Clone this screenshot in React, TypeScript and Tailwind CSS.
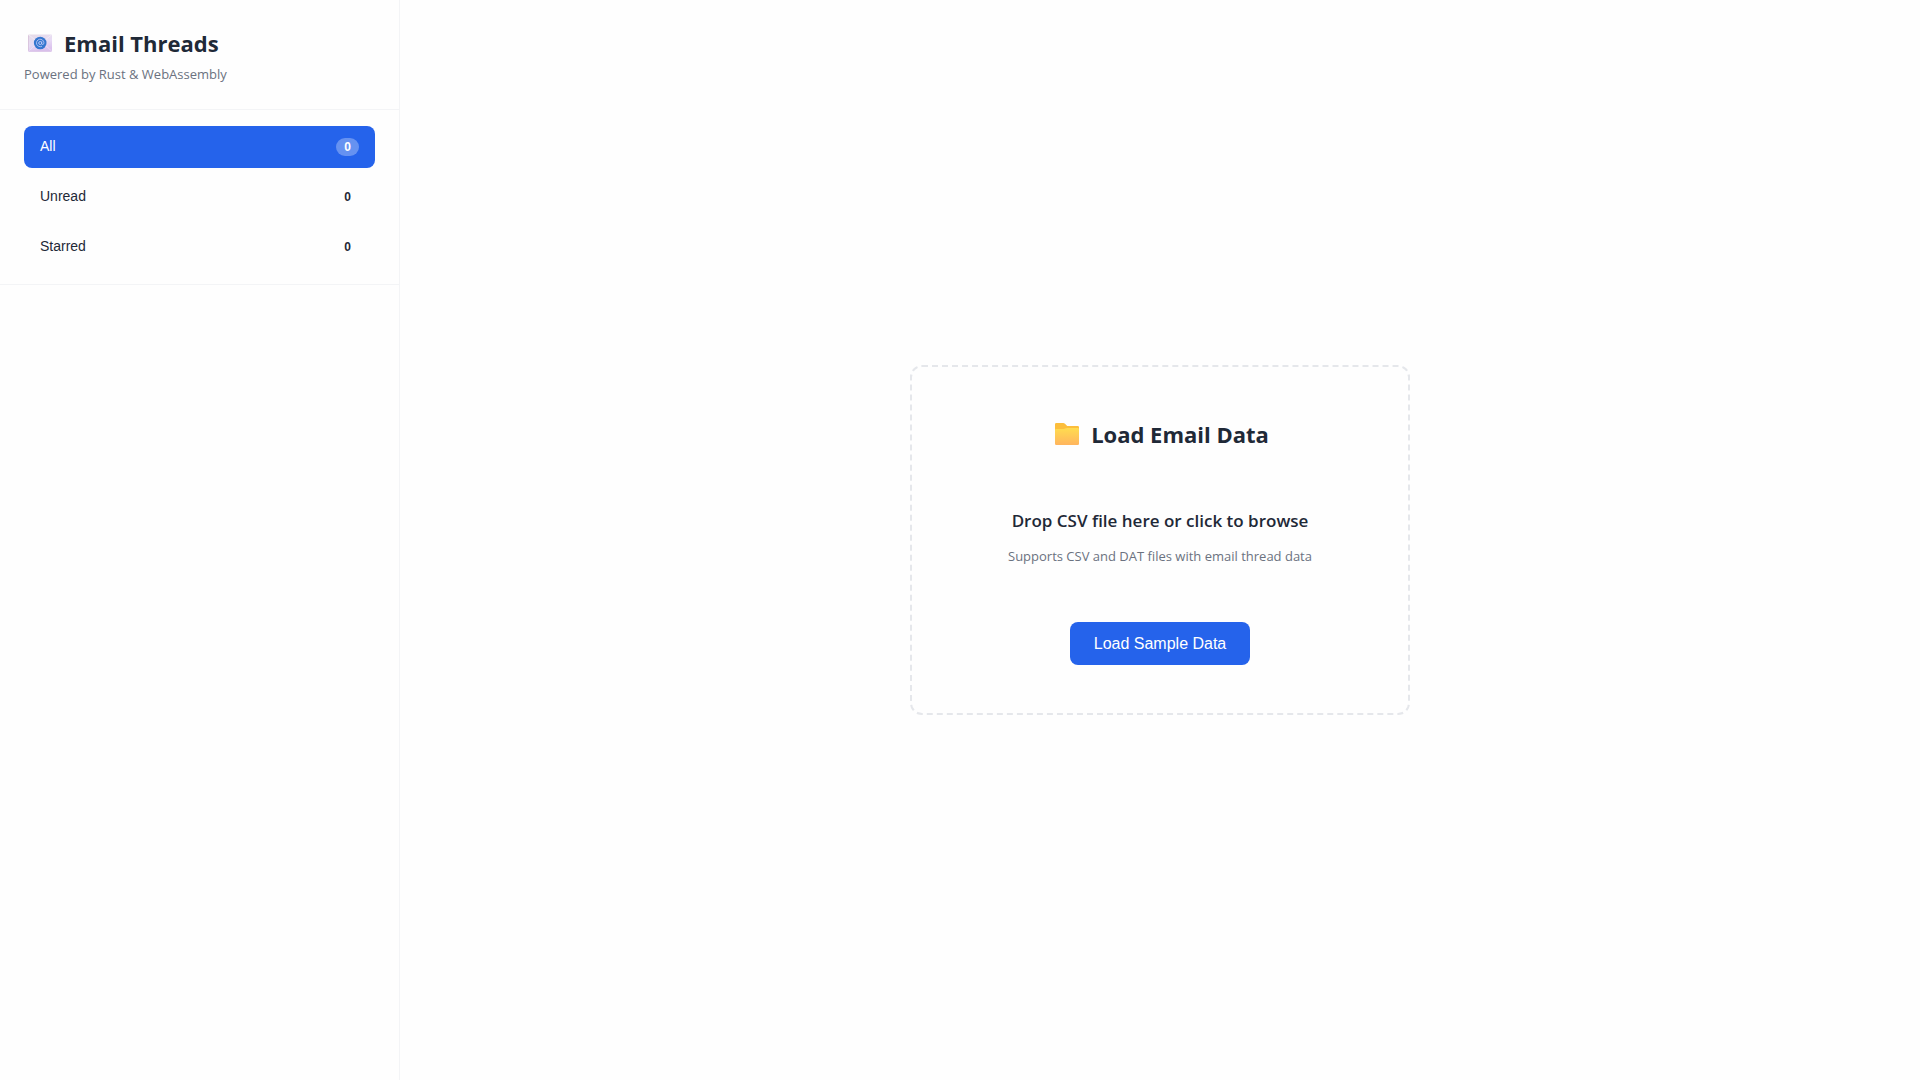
import { useId, useState } from "react";

function EnvelopeIcon() {
  return (
    <svg viewBox="0 0 24 18" className="h-[18px] w-6 shrink-0" aria-hidden="true">
      <defs>
        <linearGradient id="envelope-face" x1="0" y1="0" x2="0.4" y2="1">
          <stop offset="0" stopColor="#e5dbe6" />
          <stop offset="0.6" stopColor="#e8dcf5" />
          <stop offset="1" stopColor="#dcc3ee" />
        </linearGradient>
      </defs>
      <rect x="0" y="0.5" width="24" height="17" rx="1" fill="url(#envelope-face)" />
      <path d="M0 1.500V16.500" stroke="#d6bfd8" strokeWidth="1.500" />
      <path d="M1 1L12 10L23.500 1" fill="none" stroke="#f3eef8" strokeWidth="0.8" />
      <path d="M1 17L8 10M23.500 17L16 10" fill="none" stroke="#efe6f7" strokeWidth="0.7" />
      <path d="M0.500 17.200H23.500" stroke="#cfb0e0" strokeWidth="0.7" />
      <circle cx="12.200" cy="9" r="6.300" fill="#3577cf" />
      <circle cx="12.200" cy="9" r="1.500" fill="none" stroke="#b9c5f5" strokeWidth="1" />
      <path
        d="M13.800 7.400V9.700Q14 10.800 15 10.500Q16 10 15.900 8.700A3.700 3.700 0 1 0 14 12.200"
        fill="none"
        stroke="#b9c5f5"
        strokeWidth="0.9"
      />
    </svg>
  );
}

function FolderIcon() {
  return (
    <svg viewBox="0 0 24 22" className="h-[22px] w-6 shrink-0" aria-hidden="true">
      <defs>
        <linearGradient id="folder-front" x1="0" y1="0" x2="0" y2="1">
          <stop offset="0" stopColor="#ffdc4f" />
          <stop offset="1" stopColor="#ffb55e" />
        </linearGradient>
      </defs>
      <path d="M0 1.200Q0 0 1.200 0H8.200Q9.200 0 10 0.800L12.200 3H22.800Q24 3 24 4.200V9H0Z" fill="#fcbe3c" />
      <path d="M0 7.200Q0 6 1.200 6H8.500Q9.500 6 10.200 5.600L11 5.200Q11.500 5 12.200 5H22.800Q24 5 24 6.200V20.800Q24 22 22.800 22H1.200Q0 22 0 20.800Z" fill="url(#folder-front)" />
    </svg>
  );
}

const filters = [
  { name: "All", count: 0 },
  { name: "Unread", count: 0 },
  { name: "Starred", count: 0 },
];

export default function App() {
  const [active, setActive] = useState("All");
  const fileId = useId();

  return (
    <div className="flex min-h-screen bg-[#fefefe] font-['Open_Sans',sans-serif] text-[#1f2937]">
      <aside className="w-[400px] shrink-0 border-r border-[#f3f4f6]">
        <header className="border-b border-[#f3f4f6] p-6">
          <h1 className="flex items-center gap-3 pl-1 text-[22px] leading-[38px] font-bold">
            <EnvelopeIcon />
            Email Threads
          </h1>
          <p className="mt-0.5 text-[13px] leading-[21px] text-[#6b7280]">Powered by Rust &amp; WebAssembly</p>
        </header>
        <nav className="flex flex-col gap-2 border-b border-[#f3f4f6] px-6 py-4 font-['Liberation_Sans',sans-serif]">
          {filters.map(({ name, count }) => {
            const on = name === active;
            return (
              <button
                key={name}
                type="button"
                onClick={() => setActive(name)}
                className={
                  on
                    ? "flex items-start justify-between rounded-lg bg-[#2563eb] px-4 py-3 text-sm text-white"
                    : "flex items-start justify-between rounded-lg px-4 py-3 text-sm"
                }
              >
                <span className="leading-4">{name}</span>
                <span
                  className={
                    on
                      ? "rounded-full bg-white/30 px-2 text-xs leading-[18px] font-bold"
                      : "rounded-full px-2 text-xs leading-[18px] font-bold"
                  }
                >
                  {count}
                </span>
              </button>
            );
          })}
        </nav>
      </aside>

      <main className="flex flex-1 items-center justify-center p-8">
        <section className="flex w-[500px] flex-col items-center rounded-xl border-2 border-dashed border-[#e5e7eb] p-12 text-center">
          <h2 className="flex items-center gap-3 pl-1 text-[22px] leading-[38px] font-bold">
            <FolderIcon />
            Load Email Data
          </h2>
          <label htmlFor={fileId} className="block cursor-pointer pt-14 pb-[55px]">
            <span className="block text-[17px] leading-6 font-semibold">Drop CSV file here or click to browse</span>
            <span className="mt-3 block text-[13px] leading-[22px] text-[#6b7280]">
              Supports CSV and DAT files with email thread data
            </span>
            <input id={fileId} type="file" accept=".csv,.dat" className="hidden" />
          </label>
          <button
            type="button"
            className="rounded-lg bg-[#2563eb] px-6 py-3 font-['Liberation_Sans',sans-serif] text-base leading-[19px] text-white"
          >
            Load Sample Data
          </button>
        </section>
      </main>
    </div>
  );
}
